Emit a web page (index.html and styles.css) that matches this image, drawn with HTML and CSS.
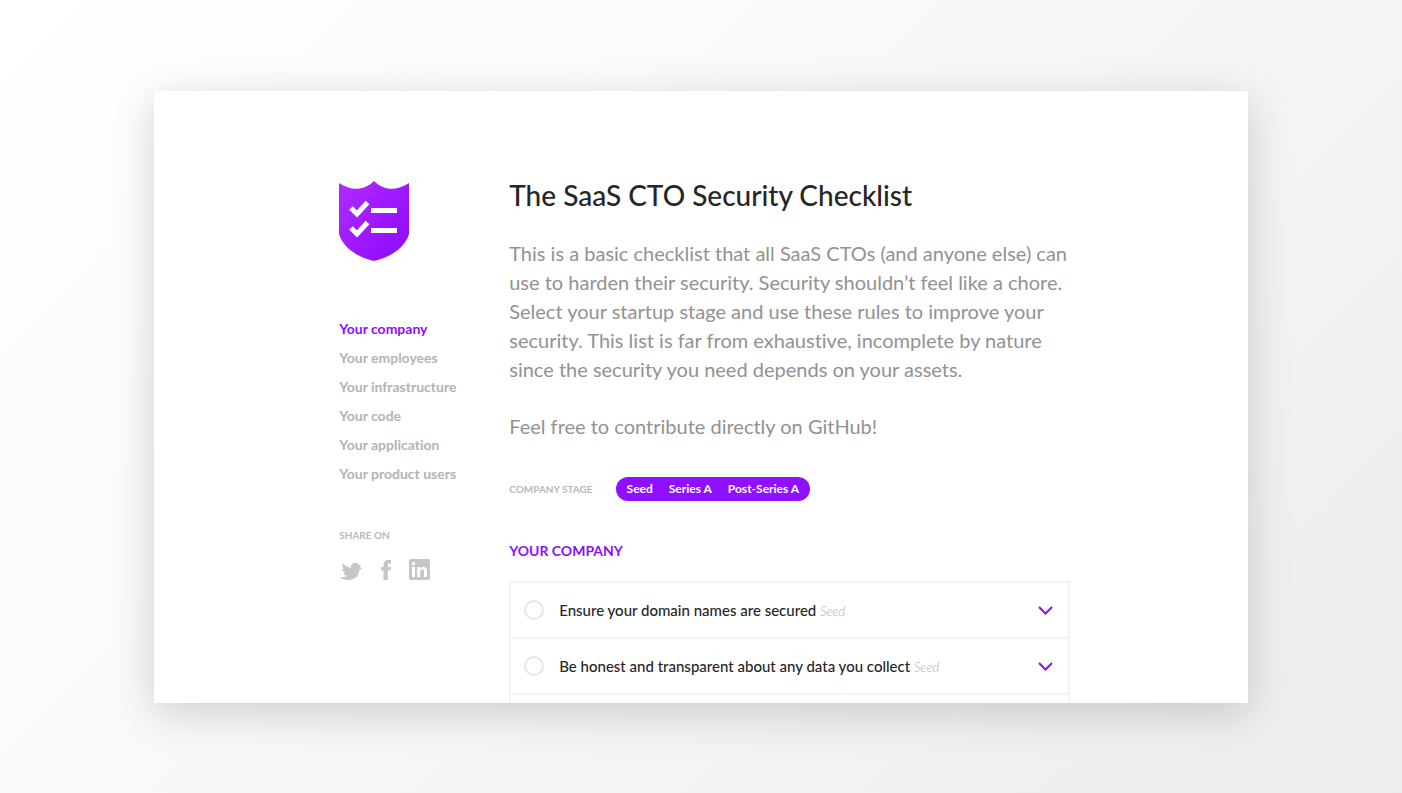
FILE: index.html
```html
<!DOCTYPE html>
<html lang="en">
<head>
<meta charset="utf-8">
<title>The SaaS CTO Security Checklist</title>
<meta name="viewport" content="width=device-width, initial-scale=1">
<link rel="stylesheet" href="styles.css">
</head>
<body>
<div class="card">
  <aside class="sidebar">
    <svg class="logo" viewBox="0 0 70 80" role="img" aria-label="Security checklist">
      <defs><linearGradient id="shield" x1="0" y1="0" x2="1" y2="1"><stop offset="0" stop-color="#b02cff"/><stop offset="1" stop-color="#8c08ff"/></linearGradient></defs>
      <path fill="url(#shield)" d="M0 2C12 10 25 10 35 0C45 10 58 10 70 2V53C66 67 50 77 35 80C20 77 4 67 0 53Z"/>
      <path fill="none" stroke="#fff" stroke-width="5" d="M12 27L18 33L28.500 21.500M12 47L18 53L28.500 41.500M32 29.500H58M32 49.500H58"/>
    </svg>
    <nav class="nav" aria-label="Sections">
      <a class="nav-link active" href="#company">Your company</a>
      <a class="nav-link" href="#employees">Your employees</a>
      <a class="nav-link" href="#infrastructure">Your infrastructure</a>
      <a class="nav-link" href="#code">Your code</a>
      <a class="nav-link" href="#application">Your application</a>
      <a class="nav-link" href="#users">Your product users</a>
    </nav>
    <div class="label">SHARE ON</div>
    <div class="share">
      <a class="share-link twitter" href="#twitter" aria-label="Twitter"><svg viewBox="0 0 22 18"><path d="M2.800 1.200C5 3.800 8.500 5.200 10.800 6C10.800 3 12.500 .8 15 .8C16.800 .8 18.200 1.600 19 3L21 3.600L20 5L22 6.800L19.600 7.800C18.800 14 14.500 18 8.500 18C5 18 2 17 0 15.200C3 15.600 5.500 15 7 13.800C5 13.500 3.800 12.500 3.500 11L5.200 10.800C3.300 10 2.300 8.500 2.300 6.800L4 7C2.300 5.500 2 3 2.800 1.200Z"/></svg></a>
      <a class="share-link facebook" href="#facebook" aria-label="Facebook"><svg viewBox="0 0 10 20"><path d="M2.500 20V10.500H0V7H2.500V4.800C2.500 1.600 4.300 0 7 0H10V3.500H8.300C7.200 3.500 6.800 4 6.800 4.900V7H10L9.500 10.500H6.800V20Z"/></svg></a>
      <a class="share-link linkedin" href="#linkedin" aria-label="LinkedIn"><svg viewBox="0 0 21 21"><rect width="21" height="21" rx="2"/><path fill="#fff" d="M3 8H6V18H3ZM8.200 8H11V9.400C12.800 6.900 18 7.200 18 12V18H15V12.700C15 9.200 11.200 9.600 11.200 12.700V18H8.200Z"/><circle cx="4.500" cy="4.800" r="1.800" fill="#fff"/></svg></a>
    </div>
  </aside>
  <main class="main">
    <h1 class="title">The SaaS CTO Security Checklist</h1>
    <p class="intro">This is a basic checklist that all SaaS CTOs (and anyone else) can<br>use to harden their security. Security shouldn’t feel like a chore.<br>Select your startup stage and use these rules to improve your<br>security. This list is far from exhaustive, incomplete by nature<br>since the security you need depends on your assets.</p>
    <p class="intro">Feel free to contribute directly on GitHub!</p>
    <div class="stage">
      <span class="label">COMPANY STAGE</span>
      <div class="pill">
        <button class="pill-button" type="button">Seed</button>
        <button class="pill-button" type="button">Series A</button>
        <button class="pill-button" type="button">Post-Series A</button>
      </div>
    </div>
    <h2 class="section-title" id="company">YOUR COMPANY</h2>
    <ul class="list">
      <li class="item">
        <input class="check" type="checkbox" id="domains">
        <label class="item-name" for="domains">Ensure your domain names are secured <em class="tag">Seed</em></label>
        <button class="toggle" type="button" aria-label="Show details"><svg viewBox="0 0 15 9"><path d="M1 1L7.500 7.500L14 1"/></svg></button>
      </li>
      <li class="item">
        <input class="check" type="checkbox" id="honest">
        <label class="item-name" for="honest">Be honest and transparent about any data you collect <em class="tag">Seed</em></label>
        <button class="toggle" type="button" aria-label="Show details"><svg viewBox="0 0 15 9"><path d="M1 1L7.500 7.500L14 1"/></svg></button>
      </li>
      <li class="item"></li>
    </ul>
  </main>
</div>
</body>
</html>
```
FILE: styles.css
```css
* { box-sizing: border-box; }

body {
  margin: 0;
  min-height: 100vh;
  padding: 91px 11% 90px;
  background: linear-gradient(135deg, #fff 0%, #fafafa 35%, #ececec 100%);
  font-family: Lato, "Open Sans", sans-serif;
  font-variant-ligatures: none;
  color: #262626;
}

.card {
  display: grid;
  grid-template-columns: 170px minmax(0, 1fr);
  height: calc(100vh - 181px);
  padding: 84px 178px 0 185px;
  overflow: hidden;
  background: #fff;
  box-shadow: 0 10px 40px rgba(0, 0, 0, 0.17);
}

.sidebar { padding-top: 6px; }
.logo { display: block; width: 70px; height: 80px; }

.nav { display: flex; flex-direction: column; margin: 53px 0 37px; }
.nav-link {
  font-size: 14px;
  font-weight: 700;
  line-height: 29px;
  color: #b4b4b4;
  text-decoration: none;
}
.nav-link.active { color: #8c0dff; }

.label { font-size: 10px; font-weight: 700; line-height: 20px; color: #b9b9b9; }

.share { display: flex; align-items: center; margin-top: 14px; }
.share-link { display: block; fill: #c6c6c6; }
.share-link svg { display: block; width: 100%; height: 100%; }
.twitter { width: 22px; height: 18px; margin: 3px 19px 0 1px; }
.facebook { width: 10px; height: 20px; margin-right: 18px; }
.linkedin { width: 21px; height: 21px; }

.title { margin: 0 0 24px; font-size: 28px; font-weight: 500; line-height: 40px; white-space: nowrap; }
.intro { margin: 0 0 28px; font-size: 20px; font-weight: 400; line-height: 29px; color: #929292; white-space: nowrap; }

.stage { display: flex; align-items: center; gap: 23px; margin-top: 36px; }
.pill { display: flex; gap: 16px; padding: 0 11px; border-radius: 12px; background: #8f0fff; }
.pill-button {
  padding: 0;
  border: 0;
  background: none;
  color: #fff;
  font: 700 12px/24px Lato, "Open Sans", sans-serif;
}

.section-title { margin: 40px 0 20px; font-size: 14px; font-weight: 700; line-height: 20px; color: #8c0dff; }

.list { margin: 0; padding: 0; list-style: none; border: 2px solid #f4f4f4; }
.item {
  display: flex;
  align-items: center;
  min-height: 56px;
  padding: 0 15px 0 13px;
  border-bottom: 2px solid #f4f4f4;
}
.check {
  flex: none;
  width: 20px;
  height: 20px;
  margin: 0 15px 0 0;
  appearance: none;
  border: 2px solid #e8e8e8;
  border-radius: 50%;
}
.item-name { flex: 1; font-size: 15px; font-weight: 500; line-height: 24px; white-space: nowrap; }
.tag { font-size: 13px; font-weight: 300; color: #b0b0b0; }
.toggle { padding: 0; border: 0; background: none; }
.toggle svg { display: block; width: 15px; height: 9px; fill: none; stroke: #8c0dff; stroke-width: 2; }
```
